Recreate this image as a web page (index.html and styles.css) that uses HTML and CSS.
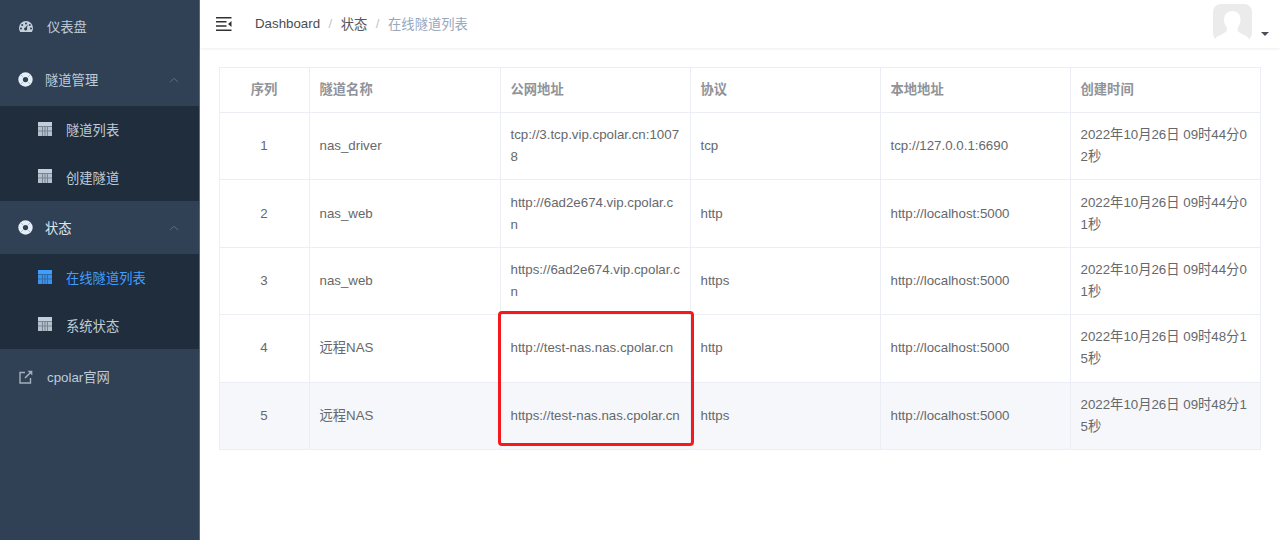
FILE: index.html
```html
<!DOCTYPE html>
<html lang="zh">
<head>
<meta charset="utf-8">
<title>cpolar</title>
<link rel="stylesheet" href="styles.css">
</head>
<body>
<svg class="defs" width="0" height="0">
  <symbol id="i-grid" viewBox="0 0 14 14">
    <path fill="currentColor" opacity=".55" d="M0 0h14v14H0z"/>
    <path fill="currentColor" d="M0 0h14v4H0z"/>
    <path fill="currentColor" opacity=".8" d="M0 5h4v3.500H0zM5 5h1.500v3.500H5zM0 9.500h4V14H0zM5 9.500h1.500V14H5zM7.500 5H9v3.500H7.500zM7.500 9.500H9V14H7.500zM10 5h4v3.500h-4zM10 9.500h4V14h-4z"/>
  </symbol>
  <symbol id="i-ring" viewBox="0 0 16 16">
    <path fill-rule="evenodd" d="M8 .3a7.700 7.700 0 1 1 0 15.400A7.700 7.700 0 0 1 8 .3zM8 5.200a2.800 2.800 0 1 0 0 5.600 2.800 2.800 0 0 0 0-5.600z" fill="currentColor"/>
    <path d="M2.700 2.700l2.800 2.800M13.300 2.700l-2.800 2.800M2.700 13.300l2.800-2.800M13.300 13.300l-2.800-2.800" stroke="#8fb2d2" stroke-width=".8" fill="none"/>
  </symbol>
  <symbol id="i-chev" viewBox="0 0 10 6">
    <path d="M1 5.200 5 1.200l4 4" fill="none" stroke="currentColor" stroke-width="1"/>
  </symbol>
</svg>
<div class="app">
  <aside class="sidebar">
    <a class="item">
      <svg class="ico dash" viewBox="0 0 14 11"><path fill-rule="evenodd" d="M7 0a7 7 0 0 1 7 7c0 1.500-.4 2.900-1.200 4H1.200A7 7 0 0 1 0 7a7 7 0 0 1 7-7zM3.200 3a1 1 0 1 0 0 2 1 1 0 0 0 0-2zM7 1.500a1 1 0 1 0 0 2 1 1 0 0 0 0-2zM10.800 3a1 1 0 1 0 0 2 1 1 0 0 0 0-2zM2 6.500a1 1 0 1 0 0 2 1 1 0 0 0 0-2zM12 6.500a1 1 0 1 0 0 2 1 1 0 0 0 0-2zM9 3.500 6.300 6.500a1.500 1.500 0 1 0 1.500.5z" fill="currentColor"/></svg>
      <span>仪表盘</span>
    </a>
    <a class="item group">
      <svg class="ring"><use href="#i-ring"/></svg>
      <span>隧道管理</span>
      <svg class="chev"><use href="#i-chev"/></svg>
    </a>
    <div class="sub">
      <a class="subitem"><svg class="grid"><use href="#i-grid"/></svg><span>隧道列表</span></a>
      <a class="subitem"><svg class="grid"><use href="#i-grid"/></svg><span>创建隧道</span></a>
    </div>
    <a class="item group">
      <svg class="ring"><use href="#i-ring"/></svg>
      <span class="strong">状态</span>
      <svg class="chev"><use href="#i-chev"/></svg>
    </a>
    <div class="sub">
      <a class="subitem active"><svg class="grid"><use href="#i-grid"/></svg><span>在线隧道列表</span></a>
      <a class="subitem"><svg class="grid"><use href="#i-grid"/></svg><span>系统状态</span></a>
    </div>
    <a class="item">
      <svg class="ico ext" viewBox="0 0 14 14"><path d="M6 2.500H1v10.500h10.500V8" fill="none" stroke="currentColor" stroke-width="1.400"/><path d="M8.500 .7H13.300V5.500z" fill="currentColor"/><path d="M11.800 2.200 6 8" fill="none" stroke="currentColor" stroke-width="1.600"/></svg>
      <span>cpolar官网</span>
    </a>
  </aside>
  <div class="main">
    <header class="navbar">
      <svg class="burger" viewBox="0 0 16 14"><path d="M0 0h15.500v1.500H0zM0 12.500h15.500V14H0zM0 4h10.500v1.500H0zM0 8.300h10.500v1.500H0zM15.500 4v6L12 7z" fill="#303133"/></svg>
      <nav class="crumbs">
        <span>Dashboard</span><i>/</i><span class="mid">状态</span><i>/</i><span class="cur">在线隧道列表</span>
      </nav>
      <div class="user">
        <svg class="avatar" viewBox="0 0 39 38">
          <rect width="39" height="37" rx="8" fill="#ebebeb"/>
          <path d="M19.500 7c4.800 0 8 3.500 8 8.500 0 2.500-.6 4.500-1.500 6-.7 1.200-1.500 2.200-1.500 3.500 0 2 1 3 3 4l8 4.500V38H3v-4.500l8-4.500c2-1 3-2 3-4 0-1.300-.8-2.300-1.500-3.500-.9-1.500-1.500-3.500-1.500-6C11 10.500 14.700 7 19.500 7z" fill="#fff"/>
        </svg>
        <span class="caret"></span>
      </div>
    </header>
    <main class="content">
      <table class="tunnels">
        <thead>
          <tr><th class="c">序列</th><th>隧道名称</th><th>公网地址</th><th>协议</th><th>本地地址</th><th>创建时间</th></tr>
        </thead>
        <tbody>
          <tr><td class="c">1</td><td>nas_driver</td><td>tcp://3.tcp.vip.cpolar.cn:10078</td><td>tcp</td><td>tcp://127.0.0.1:6690</td><td>2022年10月26日 09时44分02秒</td></tr>
          <tr><td class="c">2</td><td>nas_web</td><td class="nowrap">http://6ad2e674.vip.cpolar.c<br>n</td><td>http</td><td>http://localhost:5000</td><td>2022年10月26日 09时44分01秒</td></tr>
          <tr><td class="c">3</td><td>nas_web</td><td class="nowrap">https://6ad2e674.vip.cpolar.c<br>n</td><td>https</td><td>http://localhost:5000</td><td>2022年10月26日 09时44分01秒</td></tr>
          <tr><td class="c">4</td><td>远程NAS</td><td class="nowrap">http://test-nas.nas.cpolar.cn</td><td>http</td><td>http://localhost:5000</td><td>2022年10月26日 09时48分15秒</td></tr>
          <tr class="hover"><td class="c">5</td><td>远程NAS</td><td class="nowrap">https://test-nas.nas.cpolar.cn</td><td>https</td><td>http://localhost:5000</td><td>2022年10月26日 09时48分15秒</td></tr>
        </tbody>
      </table>
      <div class="redbox"></div>
    </main>
  </div>
</div>
</body>
</html>
```
FILE: styles.css
```css
* { box-sizing: border-box; }
html, body { margin: 0; height: 100%; overflow: hidden; }
body {
  font-family: "Liberation Sans", "Noto Sans CJK SC", sans-serif;
  font-size: 13.3px;
  color: #66686c;
  background: #fff;
}
.defs { position: absolute; }
.app { display: flex; height: 540px; }

.sidebar {
  width: 200px;
  flex: none;
  background: #304156;
  border-right: 1px solid #5c6a7a;
  color: #bfcbd9;
}
.item {
  display: flex;
  align-items: center;
  height: 53px;
  padding-left: 19px;
  color: #bfcbd9;
}
.item:last-child { height: 55px; }
.ico { flex: none; color: #c5d0dc; }
.dash { width: 14px; height: 11px; margin-right: 14px; }
.ext { width: 14px; height: 14px; margin-right: 14px; color: #a3afbd; }
.ring { width: 15px; height: 15px; margin-left: -1px; margin-right: 12px; color: #e6edf4; }
.strong { color: #dfe6ee; }
.chev { width: 10px; height: 6px; margin-left: auto; margin-right: 20px; color: #5f6e80; }
.sub { background: #1f2d3d; }
.subitem {
  display: flex;
  align-items: center;
  height: 47.5px;
  padding-left: 38px;
  color: #bfcbd9;
}
.grid { width: 14px; height: 14px; margin-right: 14px; margin-top: -2px; color: #c3cedb; }
.active, .active .grid { color: #409eff; }

.main { flex: 1; min-width: 0; }
.navbar {
  display: flex;
  align-items: center;
  height: 48px;
  box-shadow: 0 1px 3px rgba(0, 21, 41, .07);
  padding-left: 16px;
}
.burger { width: 16px; height: 14px; margin-top: -1px; margin-right: 23px; }
.crumbs { display: flex; align-items: center; color: #4a4c50; margin-top: -1px; }
.crumbs i { font-style: normal; color: #c0c4cc; margin: 0 8.5px; }
.crumbs .mid { color: #55575b; }
.crumbs .cur { color: #97a8be; }
.user { margin-left: auto; display: flex; align-items: flex-end; height: 48px; padding-top: 4px; margin-right: 11px; }
.avatar { width: 39px; height: 38px; margin-right: 9px; align-self: flex-start; }
.caret {
  width: 0; height: 0;
  border: 4px solid transparent;
  border-top: 4px solid #4a4f57;
  margin-bottom: 8px;
}

.content { position: relative; padding: 19px 19px 0; }
.tunnels {
  width: 1042px;
  table-layout: fixed;
  border-collapse: collapse;
  line-height: 22px;
}
.tunnels th, .tunnels td {
  border: 1px solid #ebeef5;
  padding: 0 10.5px 0 9.5px;
  text-align: left;
  word-break: break-all;
  font-weight: 400;
}
.tunnels td.nowrap { white-space: nowrap; }
.tunnels th { height: 45px; font-weight: 700; color: #909399; }
.tunnels td { height: 67.4px; }
.tunnels th.c, .tunnels td.c { text-align: center; }
.tunnels th:nth-child(1) { width: 90px; }
.tunnels th:nth-child(2) { width: 191px; }
.tunnels th:nth-child(3), .tunnels th:nth-child(4), .tunnels th:nth-child(5) { width: 190px; }
.hover td { background: #f5f7fa; }
.redbox {
  position: absolute;
  left: 298px;
  top: 263px;
  width: 196px;
  height: 135px;
  border: 3px solid #f5191c;
  border-radius: 4px;
}
```
